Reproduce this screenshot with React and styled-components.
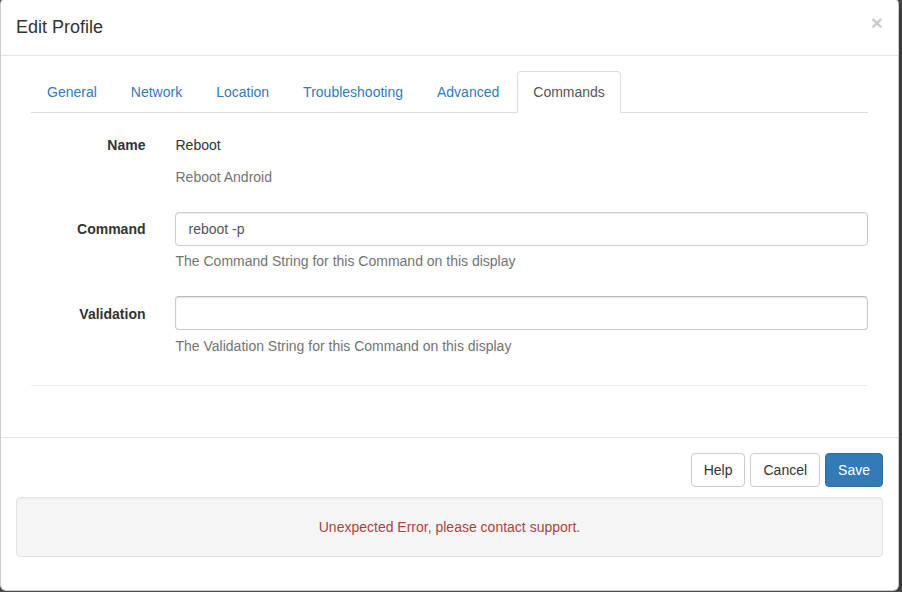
import React, { useState } from "react";
import styled, { createGlobalStyle } from "styled-components";

const GlobalStyle = createGlobalStyle`
  * { box-sizing: border-box; }
  body {
    margin: 0;
    background: #4b4b4b;
    font-family: "Liberation Sans", Arial, Helvetica, sans-serif;
    font-size: 14px;
    line-height: 1.42857143;
    color: #333;
    overflow: hidden;
  }
`;

const tabs = ["General", "Network", "Location", "Troubleshooting", "Advanced", "Commands"];

const App = () => {
  const [active, setActive] = useState("Commands");
  const [command, setCommand] = useState("reboot -p");
  const [validation, setValidation] = useState("");

  return (
    <>
      <GlobalStyle />
      <Modal>
        <Header>
          <Title>Edit Profile</Title>
          <Close type="button" aria-label="Close">×</Close>
        </Header>
        <Body>
          <TabPanel>
            <Tabs>
              {tabs.map((t) => (
                <li key={t}>
                  <Tab $active={active === t} onClick={() => setActive(t)}>
                    {t}
                  </Tab>
                </li>
              ))}
            </Tabs>
            <TabContent>
              <FormRow>
                <Label>Name</Label>
                <Control>
                  <Static>Reboot</Static>
                  <Help>Reboot Android</Help>
                </Control>
              </FormRow>
              <FormRow>
                <Label>Command</Label>
                <Control>
                  <Input value={command} onChange={(e) => setCommand(e.target.value)} />
                  <Help>The Command String for this Command on this display</Help>
                </Control>
              </FormRow>
              <FormRow>
                <Label $nudge>Validation</Label>
                <Control>
                  <Input $deep value={validation} onChange={(e) => setValidation(e.target.value)} />
                  <Help $nudge>The Validation String for this Command on this display</Help>
                </Control>
              </FormRow>
              <Divider />
            </TabContent>
          </TabPanel>
        </Body>
        <Footer>
          <ButtonBar>
            <Button>Help</Button>
            <Button>Cancel</Button>
            <Button $primary>Save</Button>
          </ButtonBar>
          <Well>Unexpected Error, please contact support.</Well>
        </Footer>
      </Modal>
    </>
  );
};

export default App;

const Modal = styled.div`
  width: 899px;
  margin: -2px 0 0 0;
  background: #fff;
  border: 1px solid rgba(0, 0, 0, 0.2);
  border-radius: 6px;
  box-shadow: 0 5px 15px rgba(0, 0, 0, 0.5);
`;

const Header = styled.div`
  display: flex;
  justify-content: space-between;
  align-items: flex-start;
  padding: 15px 15px 14px;
  border-bottom: 1px solid #e5e5e5;
`;

const Title = styled.h4`
  margin: 1px 0 0;
  font-size: 18px;
  font-weight: 500;
  line-height: 1.42857143;
  color: #333;
`;

const Close = styled.button`
  margin-top: -2px;
  padding: 0;
  border: 0;
  background: transparent;
  font-family: inherit;
  font-size: 21px;
  font-weight: bold;
  line-height: 1;
  color: #000;
  opacity: 0.2;
  text-shadow: 0 1px 0 #fff;
  cursor: pointer;
`;

const Body = styled.div`
  padding: 15px;
`;

const TabPanel = styled.div`
  padding: 0 15px 16px;
`;

const Tabs = styled.ul`
  display: flex;
  margin: 0;
  padding: 0;
  list-style: none;
  border-bottom: 1px solid #ddd;

  li {
    margin-bottom: -1px;
  }
`;

const Tab = styled.a`
  display: block;
  margin-right: 2px;
  padding: 10px 15px;
  line-height: 20px;
  border: 1px solid transparent;
  border-radius: 4px 4px 0 0;
  color: ${(p) => (p.$active ? "#555" : "#337ab7")};
  background: ${(p) => (p.$active ? "#fff" : "transparent")};
  border-color: ${(p) => (p.$active ? "#ddd #ddd transparent" : "transparent")};
  text-decoration: none;
  cursor: pointer;
`;

const TabContent = styled.div`
  padding-top: 15px;
`;

const FormRow = styled.div`
  display: grid;
  grid-template-columns: 16.66666667% 1fr;
  margin: 0 -15px 15px;
`;

const Label = styled.label`
  padding: ${(p) => (p.$nudge ? "8px" : "7px")} 15px 0;
  text-align: right;
  font-weight: bold;
  line-height: 20px;
`;

const Control = styled.div`
  padding: 0 15px;
`;

const Static = styled.p`
  margin: 0;
  min-height: 34px;
  padding: 7px 0;
  line-height: 20px;
`;

const Help = styled.span`
  display: block;
  margin: ${(p) => (p.$nudge ? "6px 0 9px" : "5px 0 10px")};
  color: #737373;
  line-height: 20px;
`;

const Input = styled.input`
  display: block;
  width: 100%;
  height: 34px;
  padding: 6px 12px;
  font-family: inherit;
  font-size: 14px;
  line-height: 1.42857143;
  color: #555;
  background: #fff;
  border: 1px solid #ccc;
  border-top-color: ${(p) => (p.$deep ? "#bbb" : "#ccc")};
  border-radius: 4px;
  box-shadow: inset 0 1px ${(p) => (p.$deep ? "2px rgba(0,0,0,.12)" : "1px rgba(0,0,0,.075)")};
  outline: none;
`;

const Divider = styled.hr`
  margin: 20px 0;
  border: 0;
  border-top: 1px solid #eee;
`;

const Footer = styled.div`
  padding: 15px;
  border-top: 1px solid #e5e5e5;
`;

const ButtonBar = styled.div`
  display: flex;
  justify-content: flex-end;
  gap: 5px;
`;

const Button = styled.button`
  padding: 6px 12px;
  font-family: inherit;
  font-size: 14px;
  line-height: 20px;
  border: 1px solid ${(p) => (p.$primary ? "#2e6da4" : "#ccc")};
  border-radius: 4px;
  background: ${(p) => (p.$primary ? "#337ab7" : "#fff")};
  color: ${(p) => (p.$primary ? "#fff" : "#333")};
  cursor: pointer;
`;

const Well = styled.div`
  margin: 10px 0 18px;
  padding: 19px;
  min-height: 20px;
  background: #f5f5f5;
  border: 1px solid #e3e3e3;
  border-radius: 4px;
  box-shadow: inset 0 1px 1px rgba(0, 0, 0, 0.05);
  text-align: center;
  color: #a94442;
  line-height: 20px;
`;
